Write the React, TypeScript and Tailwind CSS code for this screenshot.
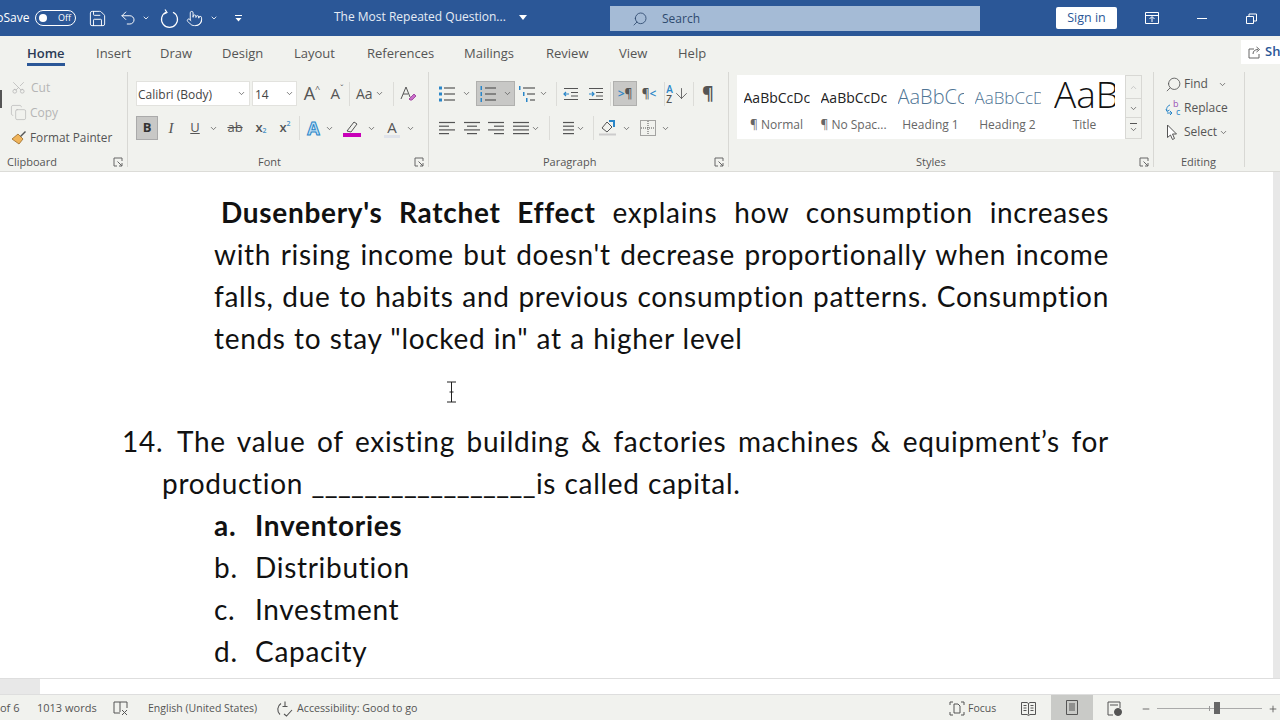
import { ReactNode } from 'react';
import { ChevronDown, Search, Scissors, Copy, Undo2, Save, Pointer, Minus, Plus, ArrowDown } from 'lucide-react';

const tabs = [
  { label: 'Home', cls: 'w-[69px] font-semibold text-[#2b3a55]' },
  { label: 'Insert', cls: 'w-[64px]' },
  { label: 'Draw', cls: 'w-[62px]' },
  { label: 'Design', cls: 'w-[72px]' },
  { label: 'Layout', cls: 'w-[73px]' },
  { label: 'References', cls: 'w-[97px]' },
  { label: 'Mailings', cls: 'w-[82px]' },
  { label: 'Review', cls: 'w-[73px]' },
  { label: 'View', cls: 'w-[59px]' },
  { label: 'Help', cls: 'w-[50px]' },
];

const styles = [
  { sample: 'AaBbCcDc', name: '¶ Normal', cls: 'w-[66px] pt-[4px] text-[14px] text-[#222]' },
  { sample: 'AaBbCcDc', name: '¶ No Spac...', cls: 'w-[66px] pt-[4px] text-[14px] text-[#222]' },
  { sample: 'AaBbCc', name: 'Heading 1', cls: 'w-[66px] pt-[2px] text-[20px] text-[#4f7595] font-light' },
  { sample: 'AaBbCcD', name: 'Heading 2', cls: 'w-[66px] pt-[4px] text-[17px] text-[#4f7595] font-light' },
  { sample: 'AaB', name: 'Title', cls: 'w-[61px] pb-[3px] text-[37px] text-[#111] font-light' },
];

function Chev({ cls = '' }: { cls?: string }) {
  return <ChevronDown size={9} strokeWidth={2} className={`text-[#555] shrink-0 ${cls}`} />;
}

function Sep({ cls = '' }: { cls?: string }) {
  return <div className={`w-px h-[24px] bg-[#dcdcd8] shrink-0 ${cls}`} />;
}

function Launcher() {
  return (
    <svg width="10" height="10" viewBox="0 0 10 10" fill="none" stroke="#666" className="shrink-0">
      <path d="M9 4V1H1v8h3M4.500 4.500 9 9M6 9h3V6" />
    </svg>
  );
}

// four short bars, used by the align buttons
function Lines({ rows }: { rows: [number, number][] }) {
  return (
    <svg width="18" height="16" viewBox="0 0 18 16" stroke="#555" strokeWidth="1.200" className="shrink-0">
      {rows.map(([a, b], i) => (
        <path key={i} d={`M${a} ${2.5 + i * 3.7}H${b}`} />
      ))}
    </svg>
  );
}

function ListIcon({ kind }: { kind: 'bullets' | 'numbers' | 'multi' }) {
  const x = kind === 'multi' ? [5, 9, 12] : [6, 6, 6];
  return (
    <svg width="18" height="18" viewBox="0 0 18 18" stroke="#555" strokeWidth="1.200" fill="#2a86c8" className="shrink-0">
      {[3, 9, 15].map((y, i) => (
        <g key={y}>
          {kind === 'bullets' && <rect x="1" y={y - 1.5} width="3" height="3" stroke="none" />}
          {kind !== 'bullets' && <rect x={kind === 'multi' ? x[i] - 4 : 1.5} y={y - 2} width="1.500" height="4" stroke="none" />}
          <path d={`M${x[i]} ${y}H17`} fill="none" />
        </g>
      ))}
    </svg>
  );
}

function IndentIcon({ flip }: { flip?: boolean }) {
  return (
    <svg width="18" height="16" viewBox="0 0 18 16" fill="none" stroke="#555" strokeWidth="1.200" className="shrink-0">
      <path d="M2 2.500h14M9 6.500h7M9 10h7M2 13.500h14" />
      <path d={flip ? 'M2 8h5M5 6l2 2-2 2' : 'M7 8H2M4 6 2 8l2 2'} stroke="#2a86c8" />
    </svg>
  );
}

function Cell({ w, children, cls = '' }: { w: string; children: ReactNode; cls?: string }) {
  return <div className={`flex items-center justify-center shrink-0 ${w} ${cls}`}>{children}</div>;
}

function GroupLabel({ label, cls }: { label: string; cls: string }) {
  return (
    <div className="mt-auto -mb-[2px] h-[14px] shrink-0 flex items-center justify-between pr-[4px] text-[11px]">
      <span className={cls}>{label}</span>
      <Launcher />
    </div>
  );
}

function DocLine({ children, cls = '' }: { children: ReactNode; cls?: string }) {
  return <div className={`h-[42px] leading-[42px] whitespace-nowrap ${cls}`}>{children}</div>;
}

function Item({ mark, text, bold }: { mark: string; text: string; bold?: boolean }) {
  return (
    <DocLine cls={`flex pl-[214px] ${bold ? 'font-bold' : ''}`}>
      <span className="w-[41px]">{mark}</span>
      <span>{text}</span>
    </DocLine>
  );
}

export default function App() {
  return (
    <div className="w-[1280px] h-[720px] overflow-hidden flex flex-col bg-white relative font-['Open_Sans','Noto_Sans',sans-serif] text-[#444]">
      {/* title bar */}
      <div className="h-[36px] bg-[#2b5797] flex items-center text-white shrink-0 text-[12px]">
        <span className="-ml-[23px] w-[58px] text-[12px] whitespace-nowrap">AutoSave</span>
        <div className="w-[41px] h-[16px] rounded-full border border-white flex items-center justify-between px-[3px] shrink-0">
          <span className="w-[8px] h-[8px] rounded-full bg-white" />
          <span className="text-[9px] pr-[1px]">Off</span>
        </div>
        <Cell w="w-[19px]" cls="ml-[12px]"><Save size={19} strokeWidth={1.200} /></Cell>
        <Cell w="w-[18px]" cls="ml-[12px]"><Undo2 size={18} strokeWidth={1.300} /></Cell>
        <Cell w="w-[9px]" cls="ml-[4px]"><ChevronDown size={8} strokeWidth={2.500} /></Cell>
        <Cell w="w-[20px]" cls="ml-[9px]">
          <svg width="19" height="19" viewBox="0 0 19 19" fill="none" stroke="white" strokeWidth="1.200">
            <path d="M6 3.200a8 8 0 1 0 7 0M5 .5l2 3-3 1.500" />
          </svg>
        </Cell>
        <Cell w="w-[17px]" cls="ml-[7px]"><Pointer size={17} strokeWidth={1.300} /></Cell>
        <Cell w="w-[9px]" cls="ml-[6px]"><ChevronDown size={8} strokeWidth={2.500} /></Cell>
        <Cell w="w-[10px]" cls="ml-[15px]">
          <svg width="9" height="9" viewBox="0 0 9 9" fill="white"><path d="M1 1h7v1H1zM1.500 4h6l-3 3.500z" /></svg>
        </Cell>
        <span className="ml-[91px] -mt-[2px] w-[180px] whitespace-nowrap text-[#e6ecf5]">The Most Repeated Question...</span>
        <svg width="8" height="5" viewBox="0 0 8 5" fill="white" className="ml-[5px] -mt-[2px] shrink-0"><path d="M0 0h8L4 5z" /></svg>
        <div className="ml-[83px] mt-[1px] w-[370px] h-[25px] bg-[#a5bbd6] flex items-center text-[#2f4a6f] shrink-0">
          <Search size={16} strokeWidth={1.300} className="ml-[22px] -scale-x-100" />
          <span className="ml-[14px] text-[12px]">Search</span>
        </div>
        <div className="ml-[76px] w-[61px] h-[22px] bg-white rounded-[2px] text-[#2b5797] flex items-center justify-center text-[12.500px] shrink-0">Sign in</div>
        <svg width="14" height="12" viewBox="0 0 14 12" fill="none" stroke="white" className="ml-[28px] shrink-0">
          <path d="M.5.500h13v11H.500zM.5 3.500h13M7 10V5M4.500 7 7 4.500 9.500 7" />
        </svg>
        <div className="ml-[38px] w-[10px] h-px bg-white shrink-0" />
        <svg width="11" height="11" viewBox="0 0 11 11" fill="none" stroke="white" className="ml-[39px] shrink-0">
          <path d="M.5 3.500h7v7h-7zM3 3.500V1h7.500v7H7.500" />
        </svg>
      </div>

      {/* tabs */}
      <div className="h-[36px] bg-[#f1f2ee] flex shrink-0 relative text-[13px] pl-[27px] text-[#555]">
        {tabs.map((t) => (
          <div key={t.label} className={`pt-[8px] shrink-0 ${t.cls}`}>
            <span className={t.label === 'Home' ? 'inline-block h-[22px] border-b-[3px] border-[#2b5797]' : ''}>{t.label}</span>
          </div>
        ))}
        <div className="absolute left-[1241px] top-[4px] w-[39px] h-[24px] bg-white flex items-center pl-[7px] gap-[4px] text-[#2b5797] font-semibold overflow-hidden whitespace-nowrap">
          <svg width="13" height="13" viewBox="0 0 13 13" fill="none" stroke="#666" className="shrink-0">
            <path d="M6 3H1v9h10V8M5 8c0-3 2-4.500 5-4.500M8.500 1 11.500 3.500 8.500 6" />
          </svg>
          Share
        </div>
      </div>

      {/* ribbon */}
      <div className="h-[100px] bg-[#f1f2ee] flex items-start shrink-0 border-b border-[#dcdcd8] text-[#555]">
        {/* clipboard */}
        <div className="w-[128px] h-[95px] shrink-0 flex flex-col border-r border-[#d8d8d4] relative">
          <div className="h-[25px] mt-[3px] shrink-0 flex items-center pl-[11px] gap-[5px] text-[#b5b5b5] text-[12px]">
            <Scissors size={15} strokeWidth={1.200} className="-rotate-90" />
            Cut
          </div>
          <div className="h-[25px] shrink-0 flex items-center pl-[10px] gap-[3px] text-[#b5b5b5] text-[12px]">
            <Copy size={17} strokeWidth={1} />
            Copy
          </div>
          <div className="h-[25px] shrink-0 flex items-center pl-[11px] gap-[3px] text-[11.800px] text-[#555]">
            <svg width="16" height="16" viewBox="0 0 16 16" className="shrink-0">
              <path d="M1 9 7 4l5 5-4 5z" fill="#f0b45a" stroke="#9a6b2a" strokeWidth=".8" />
              <path d="M9 6l5-5 1 1-5 5z" fill="#555" />
            </svg>
            Format Painter
          </div>
          <GroupLabel label="Clipboard" cls="ml-[7px]" />
          <div className="absolute left-0 top-[18px] w-[2px] h-[18px] bg-[#555]" />
        </div>

        {/* font */}
        <div className="w-[301px] h-[95px] shrink-0 flex flex-col border-r border-[#d8d8d4] pl-[8px]">
          <div className="h-[25px] mt-[9px] shrink-0 flex items-center">
            <div className="w-[114px] h-[25px] bg-white border border-[#e2e2de] flex items-center justify-between pl-[1px] pr-[3px] text-[12px] text-[#444] shrink-0">
              <span className="pt-[2px]">Calibri (Body)</span>
              <Chev />
            </div>
            <div className="ml-[2px] w-[45px] h-[25px] bg-white border border-[#e2e2de] flex items-center justify-between pl-[2px] pr-[2px] text-[12px] text-[#444] shrink-0">
              <span className="pt-[2px]">14</span>
              <Chev />
            </div>
            <Cell w="w-[18px]" cls="ml-[6px] text-[18px]">A<span className="text-[9px] -mt-[10px]">^</span></Cell>
            <Cell w="w-[16px]" cls="ml-[8px] text-[15px]">A<span className="text-[9px] -mt-[10px]">ˇ</span></Cell>
            <Sep cls="ml-[4px]" />
            <div className="ml-[6px] w-[30px] flex items-center gap-[2px] text-[14px] shrink-0">Aa<Chev /></div>
            <Sep cls="ml-[7px]" />
            <svg width="17" height="17" viewBox="0 0 17 17" fill="none" stroke="#555" className="ml-[6px] shrink-0">
              <path d="M1 14 6 2l4 10M3 9h5" />
              <path d="M9 14l5-5 2 2-4 4h-2z" fill="#c96fc9" stroke="#a44ca4" />
            </svg>
          </div>
          <div className="h-[24px] mt-[10px] shrink-0 flex items-center">
            <Cell w="w-[22px] h-[24px]" cls="bg-[#c8c8c6] border border-[#aaa] font-bold text-[13px] text-[#333]">B</Cell>
            <Cell w="w-[20px]" cls="ml-[3px] italic text-[15px] font-['Liberation_Serif',serif]">I</Cell>
            <Cell w="w-[14px]" cls="ml-[7px] underline text-[13px]">U</Cell>
            <Chev cls="ml-[7px]" />
            <Cell w="w-[18px]" cls="ml-[8px] line-through text-[13px]">ab</Cell>
            <Cell w="w-[14px]" cls="ml-[10px] text-[13px] font-semibold">x<span className="text-[7px] text-[#4a90c4] mt-[7px]">2</span></Cell>
            <Cell w="w-[14px]" cls="ml-[10px] text-[13px] font-semibold">x<span className="text-[7px] text-[#4a90c4] -mt-[7px]">2</span></Cell>
            <Sep cls="ml-[7px]" />
            <Cell w="w-[17px]" cls="ml-[5px] text-[18px] font-bold text-[#bfe0f5] [-webkit-text-stroke:1px_#2a86c8]">A</Cell>
            <Chev cls="ml-[3px]" />
            <svg width="18" height="18" viewBox="0 0 18 18" className="ml-[9px] shrink-0" fill="none">
              <path d="M4 12 11 3l3 2-6 8z" stroke="#555" />
              <path d="M0 14h18v4H0z" fill="#c800b8" />
            </svg>
            <Chev cls="ml-[6px]" />
            <div className="ml-[8px] w-[16px] flex flex-col items-center shrink-0 text-[15px] leading-[16px]">
              A
              <div className="w-[16px] h-[3px] bg-[#dfe3ea]" />
            </div>
            <Chev cls="ml-[6px]" />
          </div>
          <GroupLabel label="Font" cls="ml-[122px]" />
        </div>

        {/* paragraph */}
        <div className="w-[300px] h-[95px] shrink-0 flex flex-col border-r border-[#d8d8d4] pl-[9px]">
          <div className="h-[25px] mt-[9px] shrink-0 flex items-center">
            <ListIcon kind="bullets" />
            <Chev cls="ml-[6px]" />
            <div className="ml-[5px] w-[39px] h-[25px] bg-[#c8c8c6] border border-[#b0b0ae] flex items-center pl-[2px] shrink-0">
              <ListIcon kind="numbers" />
              <Chev cls="ml-[6px]" />
            </div>
            <div className="ml-[3px]"><ListIcon kind="multi" /></div>
            <Chev cls="ml-[3px]" />
            <Sep cls="ml-[8px]" />
            <Cell w="w-[18px]" cls="ml-[5px]"><IndentIcon /></Cell>
            <Cell w="w-[18px]" cls="ml-[7px]"><IndentIcon flip /></Cell>
            <Sep cls="ml-[5px]" />
            <Cell w="w-[24px] h-[25px]" cls="ml-[2px] bg-[#c8c8c6] border border-[#b0b0ae] text-[12px] font-semibold"><span className="text-[#2a86c8]">&gt;</span>¶</Cell>
            <Cell w="w-[18px]" cls="ml-[3px] text-[12px] font-semibold">¶<span className="text-[#2a86c8]">&lt;</span></Cell>
            <Sep cls="ml-[6px]" />
            <div className="ml-[1px] flex items-center justify-center w-[24px] shrink-0">
              <div className="text-[10px] leading-[10px] font-semibold"><div className="text-[#2a86c8]">A</div><div>Z</div></div>
              <ArrowDown size={17} strokeWidth={1.200} />
            </div>
            <Sep cls="ml-[3px]" />
            <Cell w="w-[16px]" cls="ml-[6px] text-[18px] font-bold">¶</Cell>
          </div>
          <div className="h-[24px] mt-[10px] shrink-0 flex items-center">
            <Cell w="w-[17px]"><Lines rows={[[1, 17], [1, 11], [1, 17], [1, 11]]} /></Cell>
            <Cell w="w-[17px]" cls="ml-[8px]"><Lines rows={[[1, 17], [4, 14], [1, 17], [4, 14]]} /></Cell>
            <Cell w="w-[17px]" cls="ml-[7px]"><Lines rows={[[1, 17], [7, 17], [1, 17], [7, 17]]} /></Cell>
            <Cell w="w-[17px]" cls="ml-[8px]"><Lines rows={[[1, 17], [1, 17], [1, 17], [1, 17]]} /></Cell>
            <Chev cls="ml-[2px]" />
            <Sep cls="ml-[9px]" />
            <Cell w="w-[18px]" cls="ml-[6px]"><Lines rows={[[7, 18], [7, 18], [7, 18], [7, 18]]} /></Cell>
            <Chev cls="ml-[2px]" />
            <Sep cls="ml-[8px]" />
            <svg width="18" height="18" viewBox="0 0 18 18" fill="none" stroke="#555" className="ml-[5px] shrink-0">
              <path d="M3 9 8 3l5 5-5 5z" />
              <path d="M10 2h5v6" stroke="#2a86c8" strokeWidth="2" />
              <path d="M0 15.500h17" stroke="#ccc" strokeWidth="2" />
            </svg>
            <Chev cls="ml-[5px]" />
            <svg width="16" height="16" viewBox="0 0 16 16" fill="none" stroke="#555" strokeDasharray="1 1" className="ml-[9px] shrink-0">
              <path d="M.5.500h15v15H.500zM8 1v14M1 8h14" />
            </svg>
            <Chev cls="ml-[5px]" />
          </div>
          <GroupLabel label="Paragraph" cls="ml-[105px]" />
        </div>

        {/* styles */}
        <div className="w-[425px] h-[95px] shrink-0 flex flex-col border-r border-[#d8d8d4] pl-[8px]">
          <div className="h-[64px] mt-[3px] shrink-0 flex items-stretch">
            <div className="w-[388px] pl-[1px] bg-white flex shrink-0">
              {styles.map((s) => (
                <div key={s.name} className="w-[77px] shrink-0 flex flex-col items-center overflow-hidden">
                  <div className={`h-[41px] flex items-center overflow-hidden whitespace-nowrap ${s.cls}`}>{s.sample}</div>
                  <div className="text-[12px] text-[#666] whitespace-nowrap">{s.name}</div>
                </div>
              ))}
            </div>
            <div className="w-[17px] flex flex-col border border-[#d8d8d4] shrink-0">
              <div className="h-[22px] flex items-center justify-center"><ChevronDown size={9} className="rotate-180 text-[#bbb]" /></div>
              <div className="h-[20px] border-y border-[#d8d8d4] flex items-center justify-center"><Chev /></div>
              <div className="flex-1 flex flex-col items-center justify-center">
                <div className="w-[7px] h-px bg-[#555] mb-[1px]" />
                <Chev />
              </div>
            </div>
          </div>
          <GroupLabel label="Styles" cls="ml-[179px]" />
        </div>

        {/* editing */}
        <div className="w-[91px] h-[95px] shrink-0 flex flex-col border-r border-[#d8d8d4] pl-[11px] text-[12px]">
          <div className="h-[24px] shrink-0 flex items-center gap-[1px]">
            <Search size={17} strokeWidth={1.200} className="-scale-x-100 shrink-0" />
            <span className="ml-[1px]">Find</span>
            <Chev cls="ml-[9px]" />
          </div>
          <div className="h-[24px] shrink-0 flex items-center">
            <svg width="17" height="16" viewBox="0 0 17 16" fill="none" stroke="#2a86c8" className="shrink-0 mr-[2px]">
              <path d="M5 5C2 6 1 9 2 11M1 9l1 2.500L4.500 10M2 13h5M5 11l2 2-2 2" />
              <text x="8" y="7" fontSize="9" fill="#9a4fb5" stroke="none">b</text>
              <text x="11" y="15" fontSize="9" fill="#2a86c8" stroke="none">c</text>
            </svg>
            <span>Replace</span>
          </div>
          <div className="h-[24px] shrink-0 flex items-center">
            <svg width="15" height="17" viewBox="0 0 15 17" fill="white" stroke="#555" className="shrink-0 mr-[4px]">
              <path d="M2.500 1v12.500l3-2.500 2 4.500 2-1-2-4.500h4z" />
            </svg>
            <span>Select</span>
            <Chev cls="ml-[2px]" />
          </div>
          <div className="mt-auto -mb-[2px] h-[14px] flex items-center text-[11px] ml-[16px]">Editing</div>
        </div>
      </div>

      {/* document */}
      <div className="flex-1 min-h-0 overflow-hidden relative pt-[19px] text-[#111] text-[28px] tracking-[0.700px] [word-spacing:0.500px] [font-variant-ligatures:none] font-['Lato','Carlito',sans-serif]">
        <div className="w-[1109px] [text-align-last:justify]">
          <DocLine cls="pl-[221px]"><b>Dusenbery's Ratchet Effect</b> explains how consumption increases</DocLine>
          <DocLine cls="pl-[214px]">with rising income but doesn't decrease proportionally when income</DocLine>
          <DocLine cls="pl-[214px]">falls, due to habits and previous consumption patterns. Consumption</DocLine>
        </div>
        <DocLine cls="pl-[214px]">tends to stay "locked in" at a higher level</DocLine>
        <div className="h-[61px]" />
        <div className="w-[1109px] pl-[122px] flex h-[42px] leading-[42px] whitespace-nowrap">
          <span className="w-[55px] shrink-0">14.</span>
          <span className="flex-1 [text-align-last:justify]">The value of existing building &amp; factories machines &amp; equipment’s for</span>
        </div>
        <DocLine cls="pl-[162px]">production <span className="tracking-[0.350px]">_________________</span>is called capital.</DocLine>
        <Item mark="a." text="Inventories" bold />
        <Item mark="b." text="Distribution" />
        <Item mark="c." text="Investment" />
        <Item mark="d." text="Capacity" />
      </div>

      {/* i-beam cursor, sits over the page */}
      <svg width="11" height="22" viewBox="0 0 11 22" fill="none" stroke="#222" className="absolute left-[446px] top-[381px]">
        <path d="M1 1h9M5.500 1v20M1 21h9M3.500 11h4" />
      </svg>
      <div className="absolute right-0 top-[172px] w-[7px] h-[506px] bg-[#e8e8e8]" />

      {/* horizontal scrollbar */}
      <div className="h-[17px] shrink-0 flex border-y border-[#dedede] bg-white">
        <div className="w-[40px] bg-[#e8e8e8]" />
      </div>

      {/* status bar */}
      <div className="h-[25px] shrink-0 bg-[#f1f2ee] flex items-center pt-[2px] text-[11px] text-[#555] whitespace-nowrap">
        <span className="w-[37px] shrink-0">of 6</span>
        <span className="w-[76px] shrink-0">1013 words</span>
        <svg width="16" height="15" viewBox="0 0 16 15" fill="none" stroke="#555" className="shrink-0">
          <path d="M7 12H1V1h6v10M7 1h7v6M9 9l5 5M14 9l-5 5" />
        </svg>
        <span className="ml-[19px] w-[129px] shrink-0 text-[10.500px]">English (United States)</span>
        <svg width="18" height="16" viewBox="0 0 18 16" fill="none" stroke="#555" strokeWidth="1.100" className="-ml-[1px] shrink-0">
          <path d="M5 2.500a7 7 0 0 0-1 11M9 .5v4.500M6.500 5.500h5M8 13l2.500 2 5.500-6" />
        </svg>
        <span className="ml-[3px] w-[660px] shrink-0 text-[10.700px]">Accessibility: Good to go</span>
        <svg width="16" height="15" viewBox="0 0 16 15" fill="none" stroke="#555" className="-ml-[8px] shrink-0">
          <path d="M1 4V1h3M12 1h3v3M1 11v3h3M12 14h3v-3M5 3h4l2 2v7H5z" />
        </svg>
        <span className="ml-[3px] w-[53px] shrink-0 text-[10.500px]">Focus</span>
        <svg width="15" height="15" viewBox="0 0 15 15" fill="none" stroke="#555" className="shrink-0">
          <path d="M.5 1.500H6l1.500 1 1.500-1h5.500v12H9l-1.500 1-1.500-1H.5zM7.500 2.500v11M2.500 4.500h3M2.500 7h3M2.500 9.500h3M9.500 4.500h3M9.500 7h3M9.500 9.500h3" />
        </svg>
        <div className="ml-[15px] -mt-[2px] w-[42px] h-[25px] bg-[#c9cac7] flex items-center justify-center shrink-0">
          <svg width="12" height="15" viewBox="0 0 12 15" fill="none" stroke="#555"><path d="M.5.500h11v14H.500zM3 4h6M3 6h6M3 8h6M3 10h6" /></svg>
        </div>
        <svg width="15" height="15" viewBox="0 0 15 15" fill="none" stroke="#555" className="ml-[14px] shrink-0">
          <path d="M6 14H1V1h12v6M3 4h8" />
          <circle cx="11" cy="11" r="3.500" fill="#555" />
        </svg>
        <Minus size={10} className="ml-[19px] shrink-0" />
        <div className="ml-[6px] w-[105px] h-px bg-[#aaa] relative shrink-0">
          <div className="absolute left-[52px] -top-[2px] w-px h-[5px] bg-[#999]" />
          <div className="absolute left-[57px] -top-[6px] w-[6px] h-[12px] bg-[#666]" />
        </div>
        <Plus size={10} className="ml-[6px] shrink-0" />
      </div>
    </div>
  );
}
